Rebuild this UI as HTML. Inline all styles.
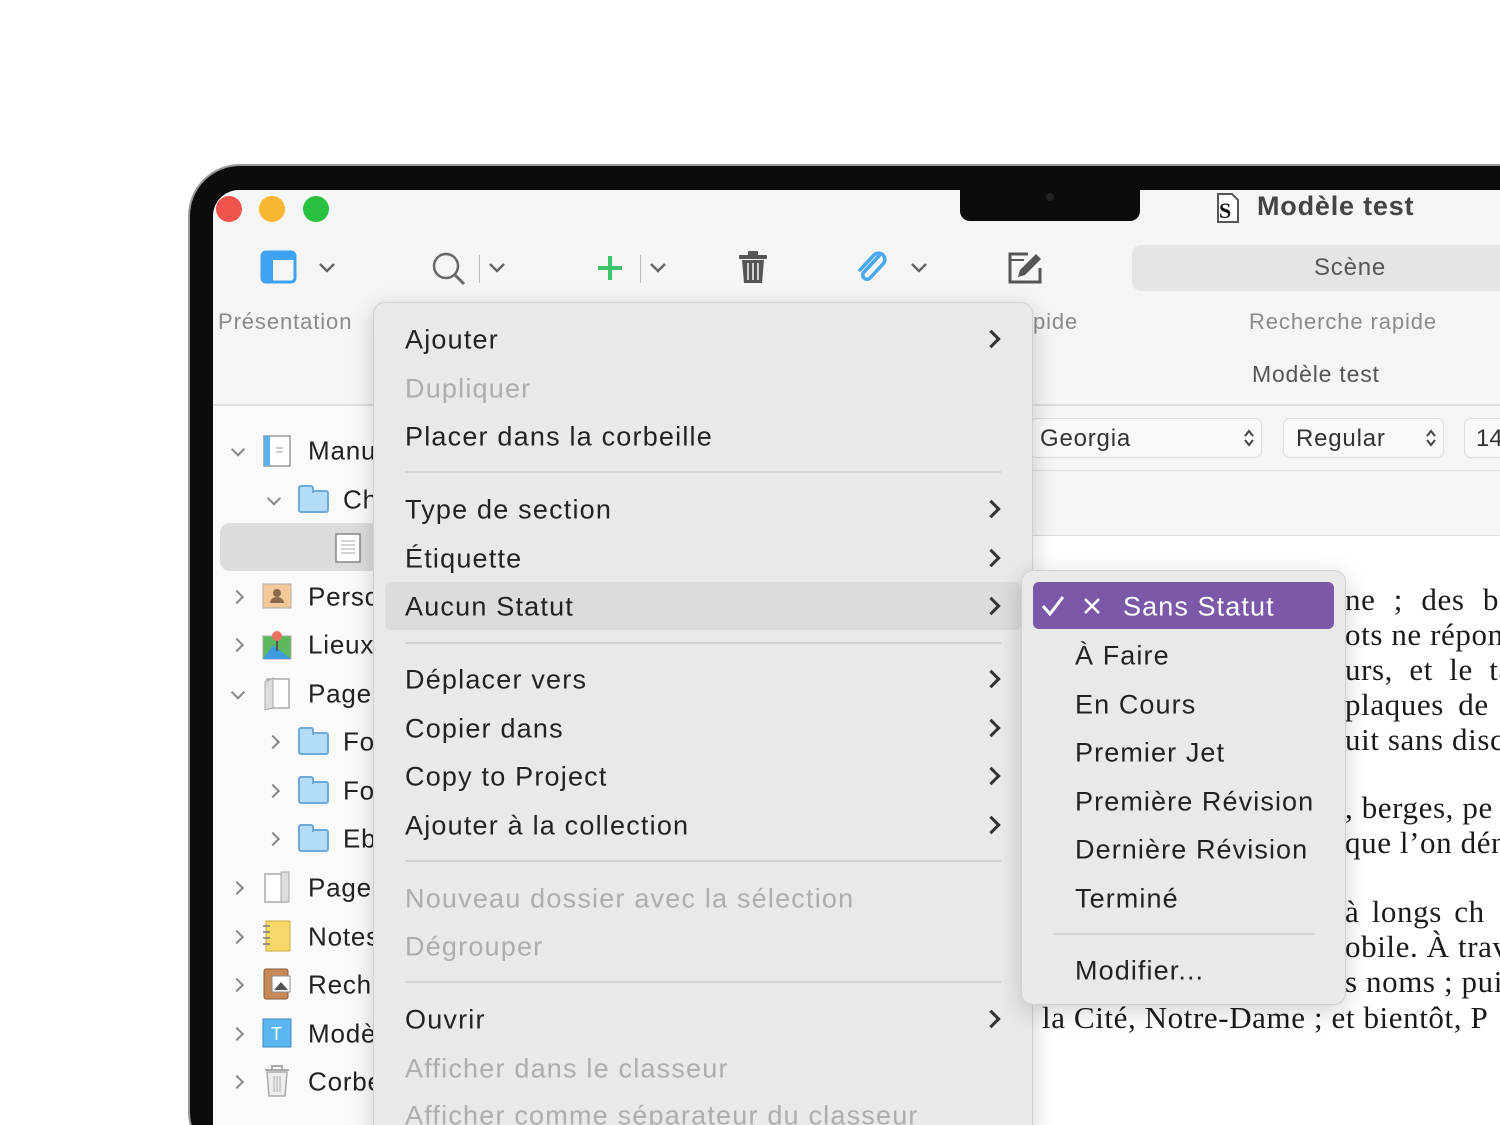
<!DOCTYPE html>
<html style="overflow:hidden;height:1125px"><head><meta charset="utf-8">
<style>
*{margin:0;padding:0;box-sizing:border-box}
body{width:1500px;height:1125px;background:#fff;position:relative;overflow:hidden;font-family:"Liberation Sans",sans-serif}
.a{position:absolute;white-space:nowrap}
.bezel{position:absolute;left:188px;top:164px;width:1400px;height:1000px;background:#0c0c0c;border-radius:52px;border:2px solid #9a9a9a}
.screen{position:absolute;left:213px;top:190px;width:1300px;height:960px;background:#f5f5f5;border-radius:26px 0 0 0;overflow:hidden}
.tl{position:absolute;top:196px;width:26px;height:26px;border-radius:50%}
.lbl{font-size:22px;color:#8a8a8a;letter-spacing:0.9px}
.mi{position:absolute;white-space:nowrap;left:405px;font-size:27px;letter-spacing:1.2px;color:#222;transform:translateY(-50%)}
.dis{color:#adadad}
.chev{position:absolute;left:985px;width:13px;height:13px;border-right:3px solid #333;border-top:3px solid #333;transform:translateY(-50%) rotate(45deg)}
.sep{position:absolute;left:405px;width:596px;height:2px;background:#d2d2d2}
.si{position:absolute;white-space:nowrap;left:1075px;font-size:27px;letter-spacing:1.1px;color:#222;transform:translateY(-50%)}
.sb{position:absolute;white-space:nowrap;font-size:26px;letter-spacing:0.8px;color:#222;transform:translateY(-50%)}
.sc{position:absolute;width:10px;height:10px;border-right:2.5px solid #888;border-bottom:2.5px solid #888}
.r{transform:translateY(-50%) rotate(-45deg)}
.d{transform:translateY(-75%) rotate(45deg)}
.fold{position:absolute;width:31px;height:23px;background:#b3dcf9;border:2px solid #6fa9d6;border-radius:3px}
.fold:before{content:"";position:absolute;left:-2px;top:-7px;width:12px;height:6px;background:#b3dcf9;border:2px solid #6fa9d6;border-bottom:none;border-radius:3px 3px 0 0}
.bt{position:absolute;white-space:nowrap;font-family:"Liberation Serif",serif;font-size:31px;letter-spacing:0.6px;color:#1a1a1a;transform:translateY(-50%)}
</style></head><body>
<div class="bezel"></div>
<div class="screen"></div>
<div class="a" style="left:960px;top:188px;width:180px;height:33px;background:#0c0c0c;border-radius:0 0 10px 10px"></div>
<div class="a" style="left:1046px;top:193px;width:8px;height:8px;border-radius:50%;background:#222"></div>
<div class="tl" style="left:216px;background:#f0544c"></div>
<div class="tl" style="left:259px;background:#f7b731"></div>
<div class="tl" style="left:303px;background:#29c041"></div>
<svg class="a" style="left:1214px;top:192px" width="28" height="32" viewBox="0 0 28 32"><path d="M4 2h14l6 6v22H4z" fill="#fff" stroke="#555" stroke-width="2"/><text x="5" y="26" font-family="Liberation Serif" font-weight="bold" font-size="22" fill="#111">S</text></svg>
<div class="a" style="left:1257px;top:191px;font-size:27px;letter-spacing:0.8px;font-weight:bold;color:#444">Modèle test</div>
<svg class="a" style="left:260px;top:250px" width="38" height="34"><rect x="2" y="2" width="33" height="30" rx="4" fill="none" stroke="#3da2f2" stroke-width="3"/><rect x="2" y="2" width="33" height="8" fill="#3da2f2"/><rect x="2" y="2" width="11" height="30" fill="#3da2f2"/></svg>
<svg class="a" style="left:318px;top:262px" width="18" height="12"><path d="M2 2l7 7 7-7" fill="none" stroke="#666" stroke-width="2.5"/></svg>
<svg class="a" style="left:430px;top:250px" width="38" height="36"><circle cx="16" cy="16" r="12" fill="none" stroke="#666" stroke-width="2.5"/><path d="M25 25l9 9" stroke="#666" stroke-width="3"/></svg>
<div class="a" style="left:479px;top:255px;width:1px;height:28px;background:#bbb"></div>
<svg class="a" style="left:488px;top:262px" width="18" height="12"><path d="M2 2l7 7 7-7" fill="none" stroke="#666" stroke-width="2.5"/></svg>
<svg class="a" style="left:596px;top:254px" width="28" height="28"><path d="M14 2v24M2 14h24" stroke="#3dc46a" stroke-width="4"/></svg>
<div class="a" style="left:640px;top:255px;width:1px;height:28px;background:#bbb"></div>
<svg class="a" style="left:649px;top:262px" width="18" height="12"><path d="M2 2l7 7 7-7" fill="none" stroke="#666" stroke-width="2.5"/></svg>
<svg class="a" style="left:737px;top:249px" width="32" height="36"><rect x="2" y="6" width="28" height="4" rx="1" fill="#555"/><rect x="11" y="2" width="10" height="5" rx="1" fill="#555"/><path d="M5 11h22l-2 23H7z" fill="#555"/><path d="M11 14v17M16 14v17M21 14v17" stroke="#eee" stroke-width="1.6"/></svg>
<svg class="a" style="left:855px;top:250px" width="34" height="36"><path d="M24 6L9 22a4 4 0 0 0 6 6L28 14a6 6 0 0 0-9-9L5 20" fill="none" stroke="#4aa8f0" stroke-width="3.5" stroke-linecap="round"/></svg>
<svg class="a" style="left:910px;top:262px" width="18" height="12"><path d="M2 2l7 7 7-7" fill="none" stroke="#666" stroke-width="2.5"/></svg>
<svg class="a" style="left:1006px;top:250px" width="40" height="36"><path d="M22 4H4v28h30V18" fill="none" stroke="#555" stroke-width="3"/><path d="M4 10h14" stroke="#555" stroke-width="2"/><path d="M30 4l5 5-16 16-7 2 2-7z" fill="#555"/></svg>
<div class="a" style="left:1132px;top:245px;width:380px;height:46px;background:#e5e5e5;border-radius:9px"></div>
<div class="a" style="left:1314px;top:254px;font-size:24px;letter-spacing:0.8px;color:#555">Scène</div>
<div class="a lbl" style="left:218px;top:309px">Présentation</div>
<div class="a lbl" style="left:1033px;top:309px">pide</div>
<div class="a lbl" style="left:1249px;top:309px">Recherche rapide</div>
<div class="a" style="left:1252px;top:361px;font-size:23px;letter-spacing:0.8px;color:#555">Modèle test</div>
<div class="a" style="left:213px;top:404px;width:1300px;height:2px;background:#dedede"></div>
<div class="a" style="left:1033px;top:470px;width:480px;height:1px;background:#ddd"></div>
<div class="a" style="left:1033px;top:535px;width:480px;height:590px;background:#fff;border-top:1px solid #ddd"></div>
<div class="a" style="left:1030px;top:418px;width:232px;height:40px;border:1.5px solid #ddd;border-radius:7px;background:#f9f9f9"></div>
<div class="a" style="left:1040px;top:425px;font-size:24px;letter-spacing:0.8px;color:#333">Georgia</div>
<svg class="a" style="left:1242px;top:428px" width="14" height="20"><path d="M3 8l4-5 4 5M3 12l4 5 4-5" fill="none" stroke="#444" stroke-width="2"/></svg>
<div class="a" style="left:1283px;top:418px;width:161px;height:40px;border:1.5px solid #ddd;border-radius:7px;background:#f9f9f9"></div>
<div class="a" style="left:1296px;top:425px;font-size:24px;letter-spacing:0.8px;color:#333">Regular</div>
<svg class="a" style="left:1424px;top:428px" width="14" height="20"><path d="M3 8l4-5 4 5M3 12l4 5 4-5" fill="none" stroke="#444" stroke-width="2"/></svg>
<div class="a" style="left:1464px;top:418px;width:60px;height:40px;border:1.5px solid #ddd;border-radius:7px;background:#f9f9f9"></div>
<div class="a" style="left:1476px;top:425px;font-size:24px;color:#333">14</div>
<div class="a" style="left:213px;top:406px;width:165px;height:719px;background:#fafafa"></div>
<div class="a" style="left:220px;top:523px;width:160px;height:48px;background:#dcdcdc;border-radius:10px"></div>
<div class="sc d" style="left:233px;top:452px"></div>
<svg class="a" style="left:263px;top:435px" width="28" height="32"><rect x="1" y="1" width="26" height="30" fill="#fff" stroke="#999" stroke-width="1.5"/><rect x="1" y="1" width="6" height="30" fill="#5fb0f0"/><path d="M13 13h7M13 17h7" stroke="#999"/></svg>
<div class="sb" style="left:308px;top:451px">Manu</div>
<div class="sc d" style="left:269px;top:501px"></div>
<div class="fold" style="left:298px;top:490px"></div>
<div class="sb" style="left:343px;top:500px">Ch</div>
<svg class="a" style="left:335px;top:533px" width="26" height="30"><rect x="1" y="1" width="24" height="28" fill="#fff" stroke="#888" stroke-width="1.5"/><path d="M6 8h14M6 12h14M6 16h14M6 20h14" stroke="#aaa"/></svg>
<div class="sc r" style="left:232px;top:597px"></div>
<svg class="a" style="left:262px;top:583px" width="30" height="26"><rect x="1" y="1" width="28" height="24" fill="#f4c99a" stroke="#aaa"/><circle cx="15" cy="10" r="4" fill="#8a6a4a"/><path d="M8 20a7 6 0 0 1 14 0z" fill="#8a6a4a"/></svg>
<div class="sb" style="left:308px;top:597px">Persc</div>
<div class="sc r" style="left:232px;top:645px"></div>
<svg class="a" style="left:262px;top:628px" width="30" height="32"><rect x="1" y="8" width="28" height="23" fill="#5cb85c" stroke="#aaa"/><path d="M1 31l10-14 18 14z" fill="#3d9be0"/><circle cx="15" cy="8" r="5" fill="#e87461"/><path d="M15 13v10" stroke="#555" stroke-width="2"/></svg>
<div class="sb" style="left:308px;top:645px">Lieux</div>
<div class="sc d" style="left:233px;top:695px"></div>
<svg class="a" style="left:263px;top:676px" width="28" height="34"><rect x="4" y="3" width="22" height="29" fill="#fff" stroke="#aaa" stroke-width="1.5"/><path d="M2 6l8-4v30l-8 2z" fill="#ddd" stroke="#aaa"/></svg>
<div class="sb" style="left:308px;top:694px">Page:</div>
<div class="sc r" style="left:268px;top:742px"></div>
<div class="fold" style="left:298px;top:732px"></div>
<div class="sb" style="left:343px;top:742px">Fo</div>
<div class="sc r" style="left:268px;top:791px"></div>
<div class="fold" style="left:298px;top:781px"></div>
<div class="sb" style="left:343px;top:791px">Fo</div>
<div class="sc r" style="left:268px;top:839px"></div>
<div class="fold" style="left:298px;top:829px"></div>
<div class="sb" style="left:343px;top:839px">Eb</div>
<div class="sc r" style="left:232px;top:888px"></div>
<svg class="a" style="left:263px;top:870px" width="28" height="34"><rect x="2" y="4" width="22" height="28" fill="#fff" stroke="#aaa" stroke-width="1.5"/><path d="M18 2h8v30h-8z" fill="#ddd" stroke="#aaa"/></svg>
<div class="sb" style="left:308px;top:888px">Page:</div>
<div class="sc r" style="left:232px;top:937px"></div>
<svg class="a" style="left:262px;top:920px" width="30" height="32"><rect x="4" y="1" width="24" height="30" fill="#f7d96a" stroke="#c9a93a"/><path d="M1 6h7M1 12h7M1 18h7M1 24h7" stroke="#777" stroke-width="1.5"/></svg>
<div class="sb" style="left:308px;top:937px">Notes</div>
<div class="sc r" style="left:232px;top:985px"></div>
<svg class="a" style="left:262px;top:968px" width="32" height="32"><rect x="2" y="1" width="24" height="30" rx="2" fill="#c98a5a" stroke="#8a5a3a"/><rect x="10" y="8" width="18" height="16" fill="#fff" stroke="#888"/><path d="M12 22l7-8 7 8z" fill="#555"/></svg>
<div class="sb" style="left:308px;top:985px">Rech</div>
<div class="sc r" style="left:232px;top:1034px"></div>
<svg class="a" style="left:262px;top:1018px" width="30" height="30"><rect x="1" y="1" width="28" height="28" fill="#5bb6f0" stroke="#3a8ac0"/><text x="9" y="22" font-family="Liberation Sans" font-size="18" fill="#fff">T</text></svg>
<div class="sb" style="left:308px;top:1034px">Modè</div>
<div class="sc r" style="left:232px;top:1082px"></div>
<svg class="a" style="left:263px;top:1064px" width="28" height="34"><path d="M2 6h24M9 6V2h10v4" fill="none" stroke="#aaa" stroke-width="2"/><path d="M4 8h20l-2 24H6z" fill="#eee" stroke="#aaa" stroke-width="1.5"/><path d="M11 12v16M14 12v16M17 12v16" stroke="#aaa"/></svg>
<div class="sb" style="left:308px;top:1082px">Corbe</div>
<div class="bt" style="left:1345px;top:600px;word-spacing:10px">ne ; des ba</div>
<div class="bt" style="left:1345px;top:635px">ots ne répon</div>
<div class="bt" style="left:1345px;top:670px;word-spacing:8px">urs, et le ta</div>
<div class="bt" style="left:1345px;top:705px;word-spacing:6px">plaques de f</div>
<div class="bt" style="left:1345px;top:740px">uit sans disco</div>
<div class="bt" style="left:1345px;top:808px">, berges, pe</div>
<div class="bt" style="left:1345px;top:843px">que l’on dén</div>
<div class="bt" style="left:1345px;top:912px;word-spacing:4px"> à longs ch</div>
<div class="bt" style="left:1345px;top:947px">obile. À trav</div>
<div class="bt" style="left:1345px;top:982px">s noms ; pui</div>
<div class="bt" style="left:1042px;top:1018px">la Cité, Notre-Dame ; et bientôt, P</div>
<div class="a" style="left:373px;top:302px;width:660px;height:840px;background:#e9e9e9;border-radius:12px;border:1px solid #d0d0d0;box-shadow:0 6px 24px rgba(0,0,0,.18)"></div>
<div class="a" style="left:385px;top:582px;width:636px;height:48px;background:#dcdcdc;border-radius:6px"></div>
<div class="mi" style="top:340px">Ajouter</div><div class="chev" style="top:339px"></div>
<div class="mi dis" style="top:389px">Dupliquer</div>
<div class="mi" style="top:437px">Placer dans la corbeille</div>
<div class="sep" style="top:471px"></div>
<div class="mi" style="top:510px">Type de section</div><div class="chev" style="top:509px"></div>
<div class="mi" style="top:559px">Étiquette</div><div class="chev" style="top:558px"></div>
<div class="mi" style="top:607px">Aucun Statut</div><div class="chev" style="top:606px"></div>
<div class="sep" style="top:642px"></div>
<div class="mi" style="top:680px">Déplacer vers</div><div class="chev" style="top:679px"></div>
<div class="mi" style="top:729px">Copier dans</div><div class="chev" style="top:728px"></div>
<div class="mi" style="top:777px">Copy to Project</div><div class="chev" style="top:776px"></div>
<div class="mi" style="top:826px">Ajouter à la collection</div><div class="chev" style="top:825px"></div>
<div class="sep" style="top:860px"></div>
<div class="mi dis" style="top:899px">Nouveau dossier avec la sélection</div>
<div class="mi dis" style="top:947px">Dégrouper</div>
<div class="sep" style="top:981px"></div>
<div class="mi" style="top:1020px">Ouvrir</div><div class="chev" style="top:1019px"></div>
<div class="mi dis" style="top:1069px">Afficher dans le classeur</div>
<div class="mi dis" style="top:1116px">Afficher comme séparateur du classeur</div>
<div class="a" style="left:1021px;top:570px;width:325px;height:435px;background:#e9e9e9;border-radius:12px;border:1px solid #d0d0d0;box-shadow:0 6px 24px rgba(0,0,0,.18)"></div>
<div class="a" style="left:1033px;top:582px;width:301px;height:47px;background:#7c58a8;border-radius:6px"></div>
<svg class="a" style="left:1040px;top:594px" width="26" height="24"><path d="M3 12l7 8L23 3" fill="none" stroke="#fff" stroke-width="3"/></svg>
<svg class="a" style="left:1082px;top:596px" width="20" height="20"><path d="M3 3l14 14M17 3L3 17" stroke="#fff" stroke-width="2.5"/></svg>
<div class="si" style="left:1123px;top:607px;color:#fff">Sans Statut</div>
<div class="si" style="top:656px">À Faire</div>
<div class="si" style="top:705px">En Cours</div>
<div class="si" style="top:753px">Premier Jet</div>
<div class="si" style="top:802px">Première Révision</div>
<div class="si" style="top:850px">Dernière Révision</div>
<div class="si" style="top:899px">Terminé</div>
<div class="a" style="left:1053px;top:933px;width:262px;height:2px;background:#d2d2d2"></div>
<div class="si" style="top:971px">Modifier...</div>
</body></html>
